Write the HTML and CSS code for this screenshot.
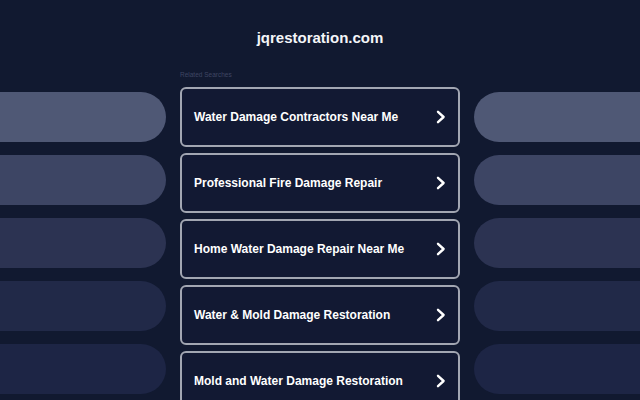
FILE: index.html
```html
<!DOCTYPE html>
<html lang="en">
<head>
<meta charset="utf-8">
<title>jqrestoration.com</title>
<link rel="stylesheet" href="styles.css">
</head>
<body>
<header class="site-title">jqrestoration.com</header>
<main class="layout">
  <div class="side side-left">
    <div class="pill p1"></div>
    <div class="pill p2"></div>
    <div class="pill p3"></div>
    <div class="pill p4"></div>
    <div class="pill p5"></div>
  </div>
  <section class="center">
    <div class="label">Related Searches</div>
    <ul class="links">
      <li class="link"><span>Water Damage Contractors Near Me</span><svg class="chev" viewBox="0 0 10 14"><polyline points="2,1.8 7.6,7 2,12.2"/></svg></li>
      <li class="link"><span>Professional Fire Damage Repair</span><svg class="chev" viewBox="0 0 10 14"><polyline points="2,1.8 7.6,7 2,12.2"/></svg></li>
      <li class="link"><span>Home Water Damage Repair Near Me</span><svg class="chev" viewBox="0 0 10 14"><polyline points="2,1.8 7.6,7 2,12.2"/></svg></li>
      <li class="link"><span>Water &amp; Mold Damage Restoration</span><svg class="chev" viewBox="0 0 10 14"><polyline points="2,1.8 7.6,7 2,12.2"/></svg></li>
      <li class="link"><span>Mold and Water Damage Restoration</span><svg class="chev" viewBox="0 0 10 14"><polyline points="2,1.8 7.6,7 2,12.2"/></svg></li>
    </ul>
  </section>
  <div class="side side-right">
    <div class="pill p1"></div>
    <div class="pill p2"></div>
    <div class="pill p3"></div>
    <div class="pill p4"></div>
    <div class="pill p5"></div>
  </div>
</main>
</body>
</html>
```
FILE: styles.css
```css
html, body {
  margin: 0;
  padding: 0;
  height: 100%;
  overflow: hidden;
}
body {
  background: #111930;
  font-family: "Liberation Sans", Arial, sans-serif;
  color: #ffffff;
}
.site-title {
  display: block;
  text-align: center;
  font-size: 15px;
  font-weight: bold;
  line-height: 20px;
  padding-top: 28px;
  color: #f4f5f8;
}
.layout {
  display: grid;
  grid-template-columns: 166px 280px 166px;
  column-gap: 14px;
  margin-top: 22px;
  align-items: start;
}
.side {
  display: flex;
  flex-direction: column;
  gap: 13px;
  padding-top: 22px;
}
.pill {
  height: 50px;
}
.side-left .pill {
  border-radius: 0 25px 25px 0;
}
.side-right .pill {
  border-radius: 25px 0 0 25px;
}
.p1 { background: #4f5875; }
.p2 { background: #3d4564; }
.p3 { background: #2c3352; }
.p4 { background: #212948; }
.p5 { background: #1d2545; }
.center {
  display: flex;
  flex-direction: column;
}
.label {
  font-size: 6.5px;
  line-height: 10px;
  color: #3f4663;
  margin-bottom: 7px;
}
.links {
  list-style: none;
  margin: 0;
  padding: 0;
  display: flex;
  flex-direction: column;
  gap: 6px;
}
.link {
  box-sizing: border-box;
  height: 60px;
  border: 2px solid #a2a6b2;
  border-radius: 6px;
  background: #121933;
  display: flex;
  align-items: center;
  justify-content: space-between;
  padding: 0 12px;
  font-size: 12px;
  font-weight: bold;
  color: #ffffff;
}
.chev {
  width: 10px;
  height: 14px;
  fill: none;
  stroke: #ffffff;
  stroke-width: 2.4;
  stroke-linecap: round;
  stroke-linejoin: round;
}
```
